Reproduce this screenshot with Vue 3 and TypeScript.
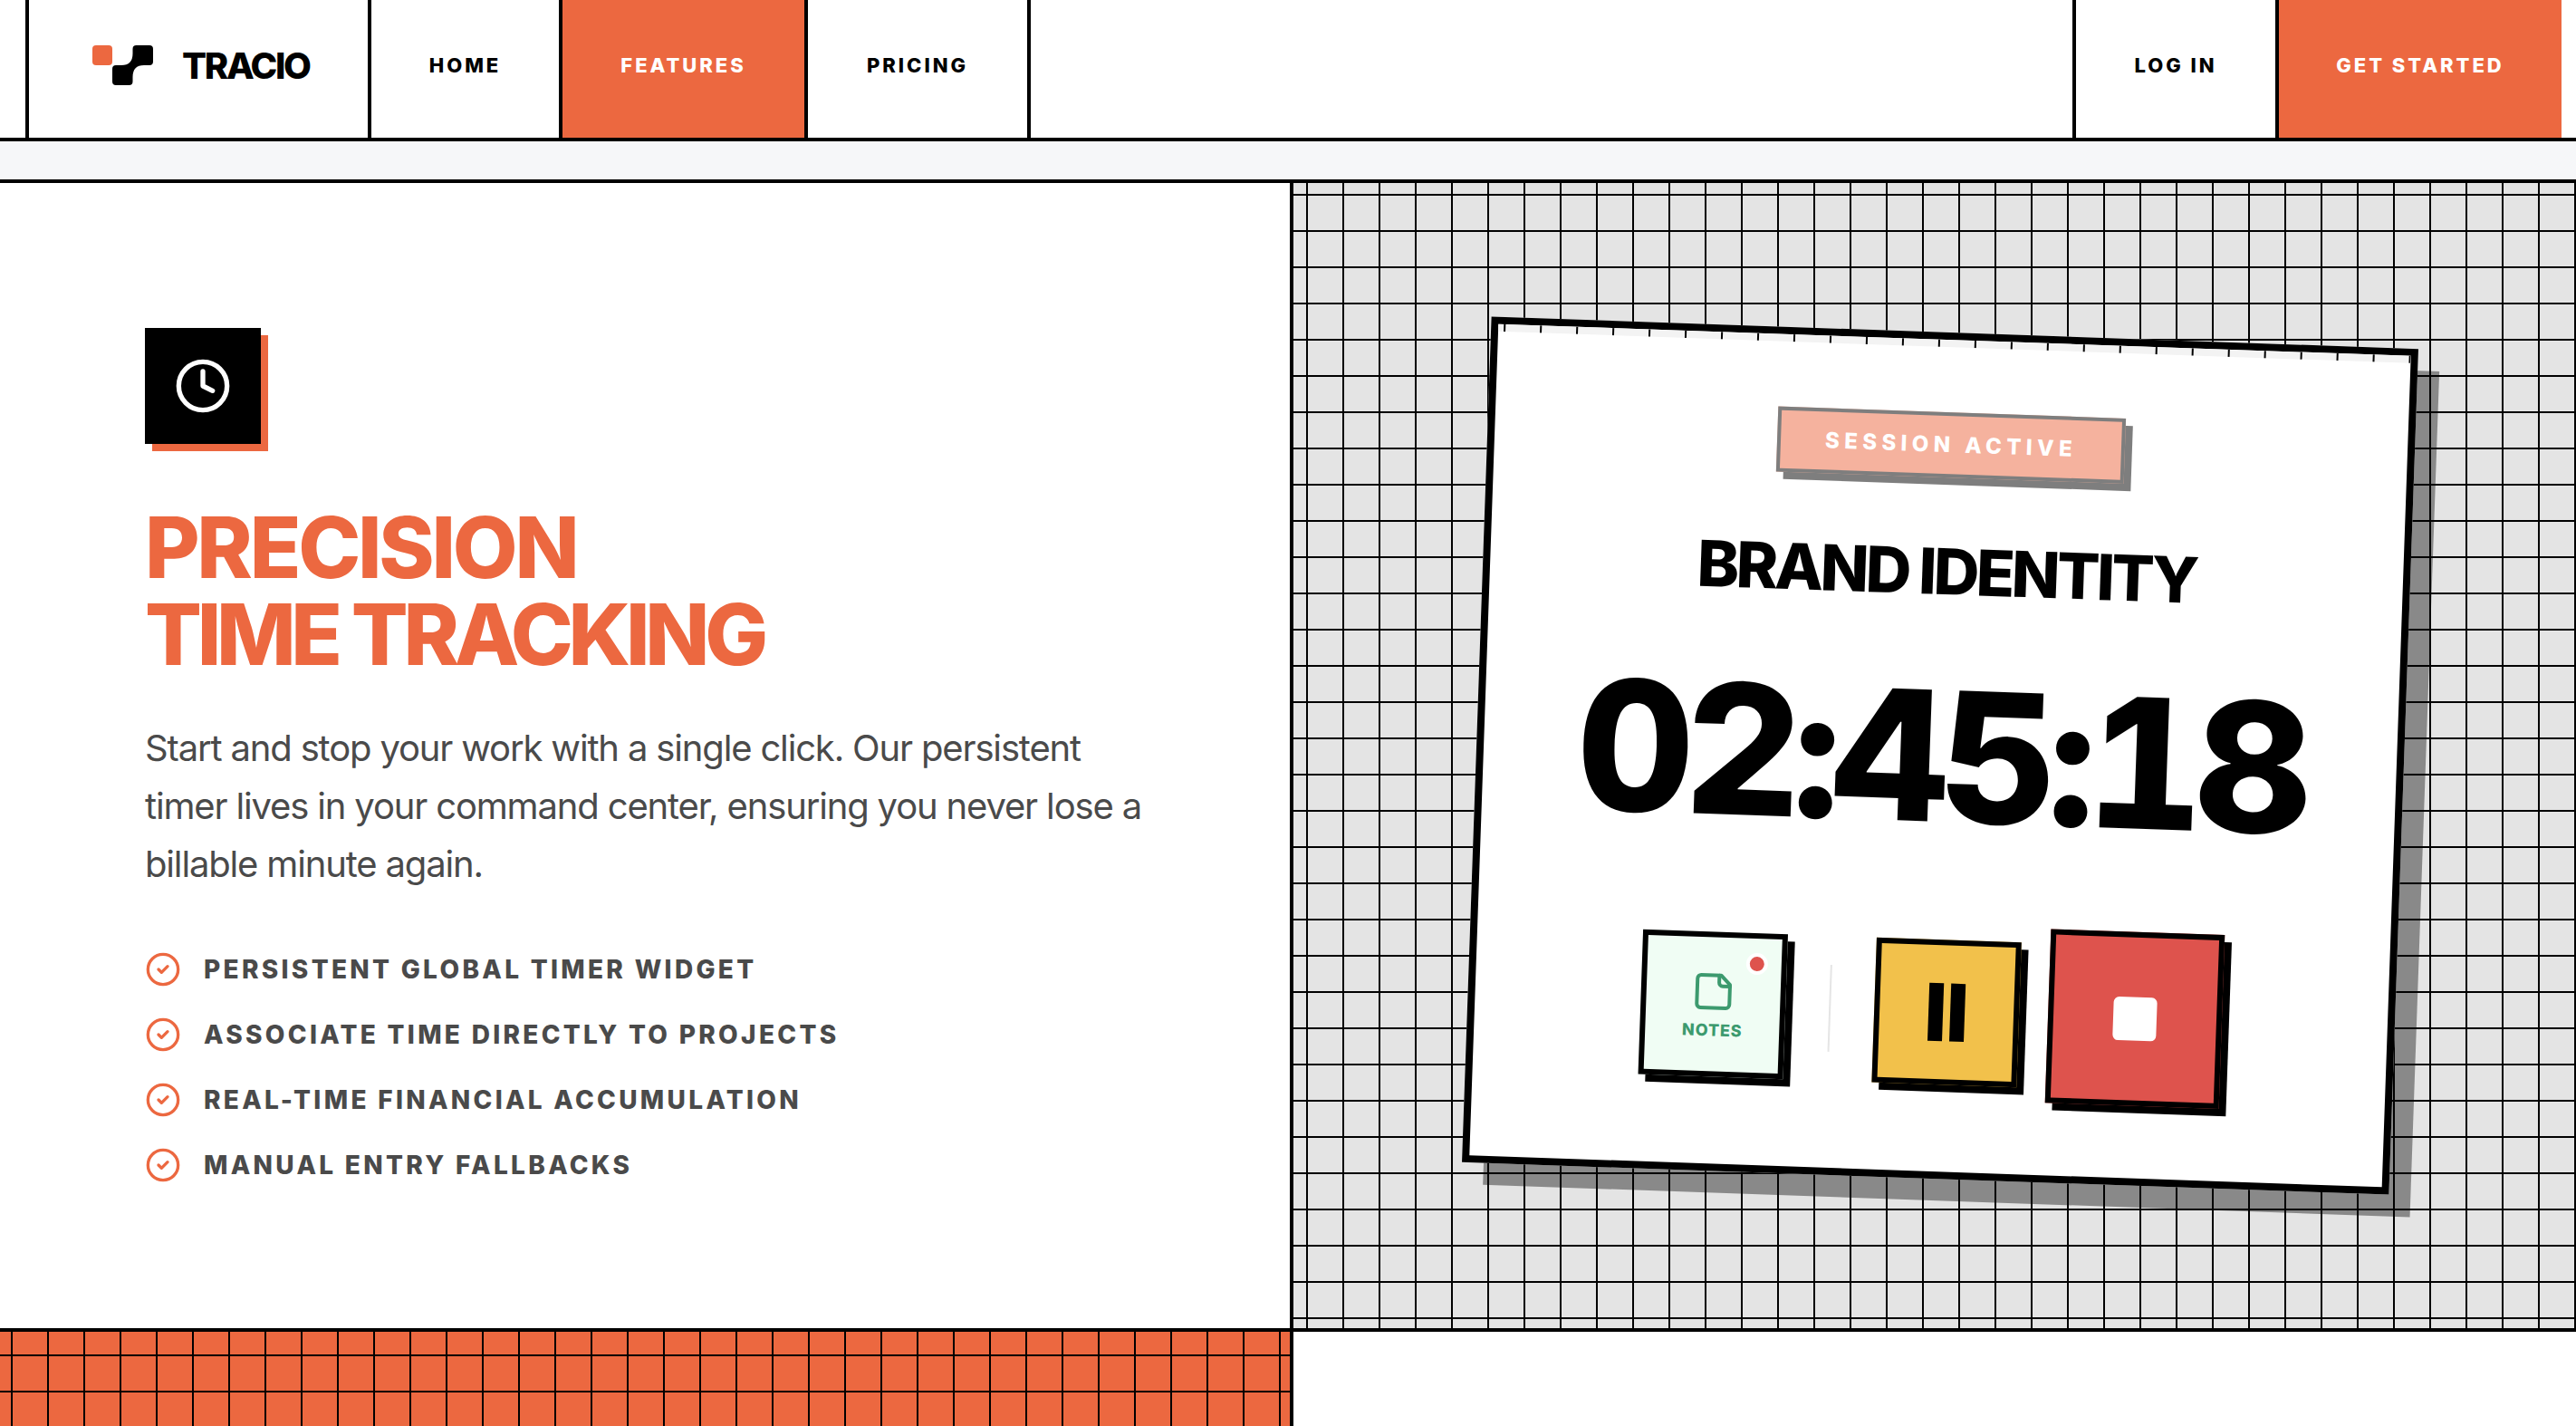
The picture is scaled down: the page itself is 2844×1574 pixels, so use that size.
<script setup lang="ts">
const navLinks = [
  { label: "HOME", active: false },
  { label: "FEATURES", active: true },
  { label: "PRICING", active: false },
]

const features = [
  "PERSISTENT GLOBAL TIMER WIDGET",
  "ASSOCIATE TIME DIRECTLY TO PROJECTS",
  "REAL-TIME FINANCIAL ACCUMULATION",
  "MANUAL ENTRY FALLBACKS",
]
</script>

<template>
  <div class="page">
    <header class="nav">
      <a class="logo">
        <svg class="logo-mark" viewBox="0 0 68 44" width="68" height="44">
          <rect width="22" height="22" rx="4" fill="#ec6840" />
          <path
            d="M48.500 0H63a4 4 0 0 1 4 4V18a4 4 0 0 1-4 4H57Q44.500 22 44.500 35V40a4 4 0 0 1-4 4H26a4 4 0 0 1-4-4V26a4 4 0 0 1 4-4H32Q44.500 22 44.500 9V4a4 4 0 0 1 4-4Z"
            fill="#000"
          />
        </svg>
        <span class="logo-name">TRACIO</span>
      </a>
      <a v-for="link in navLinks" :key="link.label" class="nav-link" :class="{ active: link.active }">
        {{ link.label }}
      </a>
      <div class="nav-space"></div>
      <a class="nav-link login">LOG IN</a>
      <a class="nav-link cta">GET STARTED</a>
    </header>

    <div class="band"></div>

    <main class="hero">
      <section class="intro">
        <div class="clock-box">
          <svg viewBox="0 0 24 24" width="64" height="64" fill="none" stroke="#fff" stroke-width="2" stroke-linecap="round" stroke-linejoin="round">
            <circle cx="12" cy="12" r="10" />
            <path d="M12 6v6l4 2" />
          </svg>
        </div>
        <h1 class="headline">PRECISION<br /><span class="tight">TIME TRACKING</span></h1>
        <p class="lead">
          Start and stop your work with a single click. Our persistent timer lives in your command center, ensuring you never lose a billable minute again.
        </p>
        <ul class="checks">
          <li v-for="item in features" :key="item">
            <svg viewBox="0 0 24 24" width="40" height="40" fill="none" stroke="#ec6840" stroke-width="2" stroke-linecap="round" stroke-linejoin="round">
              <circle cx="12" cy="12" r="10" />
              <path d="m9 12 2 2 4-4" />
            </svg>
            <span>{{ item }}</span>
          </li>
        </ul>
      </section>

      <section class="stage">
        <div class="card">
          <div class="badge">SESSION ACTIVE</div>
          <h2 class="project">BRAND IDENTITY</h2>
          <div class="timer">02:45:18</div>
          <div class="controls">
            <button type="button" class="ctl notes">
              <span class="dot"></span>
              <svg viewBox="0 0 24 24" width="48" height="48" fill="none" stroke="#3c9a6e" stroke-width="2" stroke-linecap="round" stroke-linejoin="round">
                <path d="M16 3H5a2 2 0 0 0-2 2v14a2 2 0 0 0 2 2h14a2 2 0 0 0 2-2V8Z" />
                <path d="M15 3v4a2 2 0 0 0 2 2h4" />
              </svg>
              <span class="notes-label">NOTES</span>
            </button>
            <div class="rule"></div>
            <button type="button" class="ctl pause">
              <span class="bar"></span>
              <span class="bar"></span>
            </button>
            <button type="button" class="ctl stop">
              <span class="square"></span>
            </button>
          </div>
        </div>
      </section>
    </main>

    <footer class="foot">
      <div class="foot-grid"></div>
      <div></div>
    </footer>
  </div>
</template>

<style>
html,
body {
  margin: 0;
  background: #fff;
}
</style>

<style scoped>
.page {
  display: flex;
  flex-direction: column;
  width: 2844px;
  height: 1574px;
  overflow: hidden;
  font-family: Inter, "Liberation Sans", sans-serif;
  color: #000;
  background: #fff;
}

.nav {
  display: grid;
  flex: none;
  grid-template-columns: 382px 211px 271px 246px 1fr 228px 312px;
  box-sizing: border-box;
  height: 156px;
  padding: 0 16px 0 28px;
  border-bottom: 4px solid #000;
}

.logo {
  display: flex;
  align-items: center;
  padding: 0 0 8px 70px;
  border-left: 4px solid #000;
  border-right: 4px solid #000;
}

.logo-mark {
  display: block;
  margin-right: 31px;
}

.logo-name {
  font-size: 40px;
  font-weight: 850;
  letter-spacing: -0.058em;
}

.nav-link {
  display: flex;
  align-items: center;
  justify-content: center;
  padding-bottom: 8px;
  border-right: 4px solid #000;
  font-size: 22px;
  font-weight: 800;
  letter-spacing: 0.135em;
}

.nav-link.active,
.nav-link.cta {
  color: #fff;
  background: #ec6840;
}

.nav-link.cta {
  border-right: 0;
}

.nav-link.login {
  border-left: 4px solid #000;
}

.band {
  flex: none;
  height: 42px;
  border-bottom: 4px solid #000;
  background: #f6f7f9;
}

.hero {
  display: grid;
  flex: none;
  grid-template-columns: 1428px 1fr;
  height: 1268px;
  box-sizing: border-box;
  border-bottom: 4px solid #000;
}

.intro {
  box-sizing: border-box;
  padding: 160px 0 0 160px;
  border-right: 4px solid #000;
}

.clock-box {
  display: flex;
  align-items: center;
  justify-content: center;
  width: 128px;
  height: 128px;
  background: #000;
  box-shadow: 8px 8px 0 #ec6840;
}

.headline {
  margin: 66px 0 0;
  color: #ec6840;
  font-size: 93px;
  font-weight: 850;
  line-height: 96px;
  letter-spacing: -0.035em;
}

.tight {
  letter-spacing: -0.057em;
}

.lead {
  width: 1120px;
  margin: 46px 0 0;
  color: #4a4a4a;
  font-size: 40px;
  font-weight: 400;
  line-height: 64px;
  letter-spacing: -0.029em;
}

.checks {
  display: flex;
  flex-direction: column;
  gap: 32px;
  margin: 64px 0 0;
  padding: 0;
  list-style: none;
}

.checks li {
  display: flex;
  align-items: center;
  gap: 25px;
  color: #4a4a4a;
  font-size: 28px;
  font-weight: 800;
  letter-spacing: 0.118em;
}

.checks svg {
  display: block;
}

.stage {
  display: flex;
  align-items: center;
  justify-content: center;
  padding-left: 12px;
  background-color: #e4e4e4;
  background-image: linear-gradient(#000 2px, transparent 2px), linear-gradient(90deg, #000 2px, transparent 2px);
  background-position: 14px 12px;
  background-size: 40px 40px;
}

.card {
  position: relative;
  display: flex;
  flex-direction: column;
  align-items: center;
  box-sizing: border-box;
  width: 1024px;
  height: 934px;
  padding: 80px;
  border: 8px solid #000;
  background: #fff;
  box-shadow: 24px 24px 0 rgba(0, 0, 0, 0.4);
  transform: rotate(2deg);
}

.card::before {
  content: "";
  position: absolute;
  top: 0;
  left: 0;
  right: 0;
  height: 8px;
  background-color: #f3f3f3;
  background-image: linear-gradient(90deg, #000 2px, transparent 2px);
  background-position: 6px 0;
  background-size: 40px 8px;
}

.badge {
  box-sizing: border-box;
  width: 384px;
  height: 72px;
  border: 4px solid #000;
  background: #ec6840;
  box-shadow: 8px 8px 0 #000;
  color: #fff;
  font-size: 24px;
  font-weight: 800;
  line-height: 64px;
  letter-spacing: 0.225em;
  text-align: center;
  opacity: 0.5;
}

.project {
  margin: 64px 0 0;
  font-size: 70px;
  font-weight: 850;
  line-height: 80px;
  letter-spacing: -0.051em;
}

.timer {
  margin-top: 63px;
  font-size: 200px;
  font-weight: 850;
  line-height: 200px;
  letter-spacing: -0.05em;
  font-variant-numeric: tabular-nums;
}

.controls {
  display: flex;
  align-items: center;
  gap: 48px;
  margin-top: auto;
}

.ctl {
  position: relative;
  display: flex;
  align-items: center;
  justify-content: center;
  box-sizing: border-box;
  width: 160px;
  height: 160px;
  padding: 0;
  border: 6px solid #000;
  box-shadow: 8px 8px 0 #000;
  font-family: inherit;
}

.notes {
  flex-direction: column;
  gap: 8px;
  background: #f0fdf4;
}

.dot {
  position: absolute;
  top: 16px;
  right: 15px;
  box-sizing: content-box;
  width: 16px;
  height: 16px;
  border: 4px solid #fff;
  border-radius: 50%;
  background: #de534d;
}

.notes-label {
  color: #3c9a6e;
  font-size: 18px;
  font-weight: 800;
  letter-spacing: 0.05em;
}

.rule {
  width: 2px;
  height: 96px;
  background: #e5e5e5;
}

.pause {
  gap: 8px;
  background: #f2c14b;
}

.bar {
  width: 16px;
  height: 64px;
  background: #000;
}

.stop {
  width: 192px;
  height: 192px;
  margin-left: -16px;
  background: #de534d;
}

.square {
  width: 48px;
  height: 48px;
  border-radius: 6px;
  background: #fff;
}

.foot {
  display: grid;
  flex: 1;
  grid-template-columns: 1428px 1fr;
}

.foot-grid {
  border-right: 4px solid #000;
  background-color: #ec6840;
  background-image: linear-gradient(#000 2px, transparent 2px), linear-gradient(90deg, #000 2px, transparent 2px);
  background-position: 12px 25px;
  background-size: 40px 40px;
}
</style>
